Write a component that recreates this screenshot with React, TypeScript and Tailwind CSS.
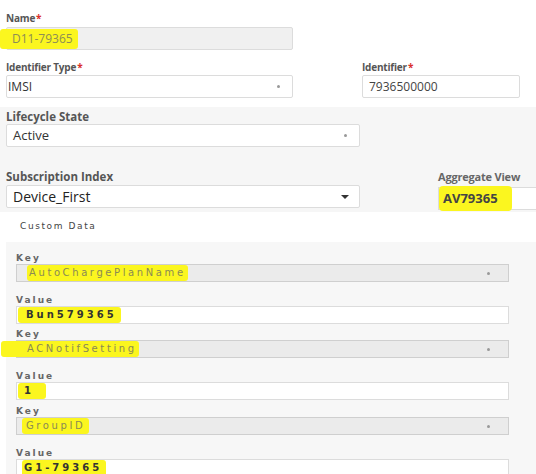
import React from "react";

const Req = () => <span className="text-[#d9302c] ml-[1px]">*</span>;

const Dot = ({ dark }: { dark?: boolean }) =>
  dark ? (
    <span className="w-0 h-0 border-l-[4px] border-r-[4px] border-t-[4px] border-l-transparent border-r-transparent border-t-[#333]" />
  ) : (
    <span className="w-[3px] h-[3px] bg-[#999] rounded-full" />
  );

const Mark = ({ children, className = "" }: { children: React.ReactNode; className?: string }) => (
  <span className={`bg-[#fbf61f] rounded-[3px] ${className}`}>{children}</span>
);

const TopLabel = ({ children, className = "" }: { children: React.ReactNode; className?: string }) => (
  <div className={`h-[12px] leading-[12px] text-[10px] font-bold text-[#555] tracking-[-0.2px] ${className}`}>{children}</div>
);

const KvLabel = ({ children, className = "" }: { children: React.ReactNode; className?: string }) => (
  <div className={`h-[11px] leading-[11px] text-[9px] font-bold text-[#666] tracking-[2px] ${className}`}>{children}</div>
);

const KeyBox = ({ children }: { children: React.ReactNode }) => (
  <div className="h-[18px] w-[493px] ml-[10px] bg-[#ebebeb] border border-[#cfcfcf] flex items-center justify-between pr-[18px] text-[10px] leading-[12px] text-[#8a8a55] tracking-[2.6px] overflow-visible">
    {children}
    <Dot />
  </div>
);

const ValueBox = ({ children }: { children: React.ReactNode }) => (
  <div className="h-[18px] w-[493px] ml-[10px] bg-white border border-[#dcdcdc] flex items-center text-[10px] leading-[12px] font-bold text-[#333] tracking-[3px]">
    {children}
  </div>
);

export default function App() {
  return (
    <div
      className="w-[536px] h-[474px] overflow-hidden bg-white text-[#333]"
      style={{ fontFamily: '"Open Sans", "DejaVu Sans", sans-serif' }}
    >
      {/* top block */}
      <div className="pl-[6px] pt-[12px] h-[107px]">
        <TopLabel>
          Name
          <Req />
        </TopLabel>
        <div className="mt-[3px] h-[23px] w-[287px] bg-[#f0f0f0] border border-[#dcdcdc] rounded-[2px] flex items-center text-[12px] text-[#8d8d55]">
          <Mark className="-ml-[7px] pl-[12px] pr-[5px] py-[1px]">D11-79365</Mark>
        </div>
        <div className="mt-[11px] flex">
          <div className="w-[287px]">
            <TopLabel>
              Identifier Type
              <Req />
            </TopLabel>
            <div className="mt-[2px] h-[23px] bg-white border border-[#dcdcdc] rounded-[2px] flex items-center justify-between pl-[1px] pr-[12px] text-[12px] text-[#333]">
              IMSI
              <Dot />
            </div>
          </div>
          <div className="ml-[69px] w-[158px]">
            <TopLabel>
              Identifier
              <Req />
            </TopLabel>
            <div className="mt-[2px] h-[23px] bg-white border border-[#dcdcdc] rounded-[2px] flex items-center pl-[6px] text-[12px] text-[#444]">
              7936500000
            </div>
          </div>
        </div>
      </div>

      {/* grey state block */}
      <div className="h-[105px] bg-[#f6f6f6] pl-[6px] pt-[4px] flex">
        <div className="w-[354px]">
          <TopLabel className="text-[11.5px] tracking-[0px]">Lifecycle State</TopLabel>
          <div className="mt-[1px] h-[23px] bg-white border border-[#dcdcdc] rounded-[2px] flex items-center justify-between pl-[6px] pr-[12px] text-[13px] text-[#333]">
            Active
            <Dot />
          </div>
          <div className="mt-[24px]">
            <TopLabel className="text-[11.5px] tracking-[0px]">Subscription Index</TopLabel>
          </div>
          <div className="mt-[2px] h-[23px] bg-white border border-[#dcdcdc] rounded-[2px] flex items-center justify-between pl-[6px] pr-[10px] text-[14px] text-[#222]">
            Device_First
            <Dot dark />
          </div>
        </div>
        <div className="ml-[78px] mt-[60px] flex-1">
          <TopLabel>
            <span className="text-[11px] text-[#666]">Aggregate View</span>
          </TopLabel>
          <div className="mt-[4px] h-[23px] bg-white border-l border-t border-b border-[#dcdcdc] flex items-center text-[13px] font-bold text-[#444]">
            <Mark className="pl-[4px] pr-[14px] py-[3px] rounded-[4px]">AV79365</Mark>
          </div>
        </div>
      </div>

      {/* custom data */}
      <div
        className="pl-[20px] pt-[8px] h-[30px] text-[9px] text-[#444] tracking-[1.6px]"
        style={{ fontFamily: '"DejaVu Sans", sans-serif' }}
      >
        Custom Data
      </div>
      <div
        className="ml-[6px] bg-[#f7f7f7] h-[232px] pt-[11px]"
        style={{ fontFamily: '"DejaVu Sans", sans-serif' }}
      >
        <KvLabel className="ml-[10px]">Key</KvLabel>
        <KeyBox>
          <Mark className="ml-[10px] px-[2px] py-[2px]">AutoChargePlanName</Mark>
        </KeyBox>
        <KvLabel className="ml-[10px] mt-[13px]">Value</KvLabel>
        <ValueBox>
          <Mark className="ml-[1px] pl-[8px] pr-[4px] py-[2px]">Bun579365</Mark>
        </ValueBox>
        <KvLabel className="ml-[10px] mt-[5px]">Key</KvLabel>
        <KeyBox>
          <Mark className="-ml-[16px] pl-[26px] pr-[2px] py-[2px]">ACNotifSetting</Mark>
        </KeyBox>
        <KvLabel className="ml-[10px] mt-[13px]">Value</KvLabel>
        <ValueBox>
          <Mark className="ml-[1px] pl-[6px] pr-[12px] py-[2px]">1</Mark>
        </ValueBox>
        <KvLabel className="ml-[10px] mt-[6px]">Key</KvLabel>
        <KeyBox>
          <Mark className="ml-[5px] pl-[4px] pr-[4px] py-[2px]">GroupID</Mark>
        </KeyBox>
        <KvLabel className="ml-[10px] mt-[13px]">Value</KvLabel>
        <ValueBox>
          <Mark className="ml-[5px] pl-[2px] pr-[4px] py-[2px]">G1-79365</Mark>
        </ValueBox>
      </div>
    </div>
  );
}
